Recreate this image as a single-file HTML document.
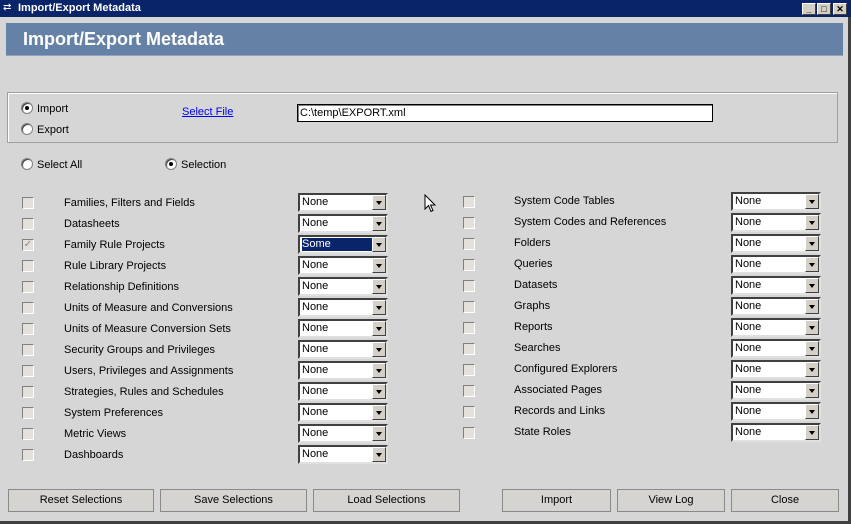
<!DOCTYPE html>
<html><head><meta charset="utf-8"><style>
*{margin:0;padding:0;box-sizing:border-box}
body{width:851px;height:524px;overflow:hidden;background:#d6d6d6;font-family:"Liberation Sans",sans-serif;font-size:11px;color:#000;position:relative}
.a{position:absolute}
#tb{left:0;top:0;width:851px;height:17px;background:#0a246a;color:#fff;font-weight:bold;font-size:11px;line-height:17px;padding-left:18px}
#hd{left:6px;top:23px;width:837px;height:33px;background:#6581a5;border-bottom:1px solid #8fa3bf;color:#fff;font-weight:bold;font-size:18px;line-height:33px;padding-left:17px}
.wb{top:3px;width:14px;height:12px;background:#d4d0c8;border:1px solid;border-color:#fff #404040 #404040 #fff;font-size:9px;line-height:10px;text-align:center;color:#000;font-weight:bold}
#gb{left:7px;top:92px;width:831px;height:51px;border:1px solid #a0a0a0;box-shadow:inset 1px 1px 0 #fff}
.rd{width:12px;height:12px;border-radius:50%;background:#fff;border:1px solid #808080;box-shadow:inset 1px 1px 0 #404040}
.rd.on::after{content:"";position:absolute;left:3px;top:3px;width:4px;height:4px;border-radius:50%;background:#000}
.cb{width:12px;height:12px;background:#e4e0dc;border:1px solid;border-color:#808080 #fff #fff #808080;font-size:10px;line-height:9px;color:#888;text-align:center}
.dd{width:90px;height:19px;background:#fff;border:2px solid;border-color:#404040 #e0e0e0 #e0e0e0 #404040;padding-left:2px;line-height:14px}
.dd .ar{position:absolute;right:0;top:0;width:14px;height:15px;background:#d4d0c8;border:1px solid;border-color:#fff #404040 #404040 #fff}
.dd .ar::after{content:"";position:absolute;left:3px;top:5px;border:3px solid transparent;border-top:4px solid #000}
.sel{background:#0a246a;color:#fff;display:inline-block;width:72px;height:13px;line-height:13px}
.bt{top:489px;height:23px;background:#d6d4d0;border:1px solid #8a8a8a;text-align:center;line-height:21px}
</style></head><body>
<div class="a" id="tb">Import/Export Metadata</div>
<div class="a" style="left:3px;top:3px;color:#fff;font-size:10px;line-height:10px">⇄</div>
<div class="a wb" style="left:802px">_</div>
<div class="a wb" style="left:817px">□</div>
<div class="a wb" style="left:833px">✕</div>
<div class="a" style="left:848px;top:17px;width:3px;height:507px;background:#404040"></div>
<div class="a" style="left:0;top:521px;width:851px;height:3px;background:#404040"></div>
<div class="a" id="hd">Import/Export Metadata</div>
<div class="a" id="gb"></div>
<div class="a rd on" style="left:21px;top:102px"></div><div class="a" style="left:37px;top:103px">Import</div>
<div class="a rd" style="left:21px;top:123px"></div><div class="a" style="left:37px;top:124px">Export</div>
<div class="a" style="left:182px;top:106px;color:#0000ee;text-decoration:underline">Select File</div>
<div class="a" style="left:297px;top:104px;width:416px;height:18px;background:#fff;border:1px solid #000;box-shadow:inset 1px 1px 0 #808080;padding-left:2px;line-height:16px">C:\temp\EXPORT.xml</div>
<div class="a rd" style="left:21px;top:158px"></div><div class="a" style="left:37px;top:159px">Select All</div>
<div class="a rd on" style="left:165px;top:158px"></div><div class="a" style="left:181px;top:159px">Selection</div>

<div class="a cb" style="left:22px;top:197px"></div><div class="a" style="left:64px;top:197px">Families, Filters and Fields</div><div class="a dd" style="left:298px;top:193px">None<span class="ar"></span></div>
<div class="a cb" style="left:22px;top:218px"></div><div class="a" style="left:64px;top:218px">Datasheets</div><div class="a dd" style="left:298px;top:214px">None<span class="ar"></span></div>
<div class="a cb" style="left:22px;top:239px">✓</div><div class="a" style="left:64px;top:239px">Family Rule Projects</div><div class="a dd" style="left:298px;top:235px"><span class="sel">Some</span><span class="ar"></span></div>
<div class="a cb" style="left:22px;top:260px"></div><div class="a" style="left:64px;top:260px">Rule Library Projects</div><div class="a dd" style="left:298px;top:256px">None<span class="ar"></span></div>
<div class="a cb" style="left:22px;top:281px"></div><div class="a" style="left:64px;top:281px">Relationship Definitions</div><div class="a dd" style="left:298px;top:277px">None<span class="ar"></span></div>
<div class="a cb" style="left:22px;top:302px"></div><div class="a" style="left:64px;top:302px">Units of Measure and Conversions</div><div class="a dd" style="left:298px;top:298px">None<span class="ar"></span></div>
<div class="a cb" style="left:22px;top:323px"></div><div class="a" style="left:64px;top:323px">Units of Measure Conversion Sets</div><div class="a dd" style="left:298px;top:319px">None<span class="ar"></span></div>
<div class="a cb" style="left:22px;top:344px"></div><div class="a" style="left:64px;top:344px">Security Groups and Privileges</div><div class="a dd" style="left:298px;top:340px">None<span class="ar"></span></div>
<div class="a cb" style="left:22px;top:365px"></div><div class="a" style="left:64px;top:365px">Users, Privileges and Assignments</div><div class="a dd" style="left:298px;top:361px">None<span class="ar"></span></div>
<div class="a cb" style="left:22px;top:386px"></div><div class="a" style="left:64px;top:386px">Strategies, Rules and Schedules</div><div class="a dd" style="left:298px;top:382px">None<span class="ar"></span></div>
<div class="a cb" style="left:22px;top:407px"></div><div class="a" style="left:64px;top:407px">System Preferences</div><div class="a dd" style="left:298px;top:403px">None<span class="ar"></span></div>
<div class="a cb" style="left:22px;top:428px"></div><div class="a" style="left:64px;top:428px">Metric Views</div><div class="a dd" style="left:298px;top:424px">None<span class="ar"></span></div>
<div class="a cb" style="left:22px;top:449px"></div><div class="a" style="left:64px;top:449px">Dashboards</div><div class="a dd" style="left:298px;top:445px">None<span class="ar"></span></div>

<div class="a cb" style="left:463px;top:196px"></div><div class="a" style="left:514px;top:195px">System Code Tables</div><div class="a dd" style="left:731px;top:192px">None<span class="ar"></span></div>
<div class="a cb" style="left:463px;top:217px"></div><div class="a" style="left:514px;top:216px">System Codes and References</div><div class="a dd" style="left:731px;top:213px">None<span class="ar"></span></div>
<div class="a cb" style="left:463px;top:238px"></div><div class="a" style="left:514px;top:237px">Folders</div><div class="a dd" style="left:731px;top:234px">None<span class="ar"></span></div>
<div class="a cb" style="left:463px;top:259px"></div><div class="a" style="left:514px;top:258px">Queries</div><div class="a dd" style="left:731px;top:255px">None<span class="ar"></span></div>
<div class="a cb" style="left:463px;top:280px"></div><div class="a" style="left:514px;top:279px">Datasets</div><div class="a dd" style="left:731px;top:276px">None<span class="ar"></span></div>
<div class="a cb" style="left:463px;top:301px"></div><div class="a" style="left:514px;top:300px">Graphs</div><div class="a dd" style="left:731px;top:297px">None<span class="ar"></span></div>
<div class="a cb" style="left:463px;top:322px"></div><div class="a" style="left:514px;top:321px">Reports</div><div class="a dd" style="left:731px;top:318px">None<span class="ar"></span></div>
<div class="a cb" style="left:463px;top:343px"></div><div class="a" style="left:514px;top:342px">Searches</div><div class="a dd" style="left:731px;top:339px">None<span class="ar"></span></div>
<div class="a cb" style="left:463px;top:364px"></div><div class="a" style="left:514px;top:363px">Configured Explorers</div><div class="a dd" style="left:731px;top:360px">None<span class="ar"></span></div>
<div class="a cb" style="left:463px;top:385px"></div><div class="a" style="left:514px;top:384px">Associated Pages</div><div class="a dd" style="left:731px;top:381px">None<span class="ar"></span></div>
<div class="a cb" style="left:463px;top:406px"></div><div class="a" style="left:514px;top:405px">Records and Links</div><div class="a dd" style="left:731px;top:402px">None<span class="ar"></span></div>
<div class="a cb" style="left:463px;top:427px"></div><div class="a" style="left:514px;top:426px">State Roles</div><div class="a dd" style="left:731px;top:423px">None<span class="ar"></span></div>

<svg class="a" style="left:424px;top:194px" width="12" height="20" viewBox="0 0 12 20"><path d="M1 1 L1 15 L4.5 11.5 L7 17.5 L9 16.5 L6.5 11 L11 11 Z" fill="#fff" stroke="#000" stroke-width="1"/></svg>

<div class="a bt" style="left:8px;width:146px">Reset Selections</div>
<div class="a bt" style="left:160px;width:147px">Save Selections</div>
<div class="a bt" style="left:313px;width:147px">Load Selections</div>
<div class="a bt" style="left:502px;width:109px">Import</div>
<div class="a bt" style="left:617px;width:108px">View Log</div>
<div class="a bt" style="left:731px;width:108px">Close</div>
</body></html>
